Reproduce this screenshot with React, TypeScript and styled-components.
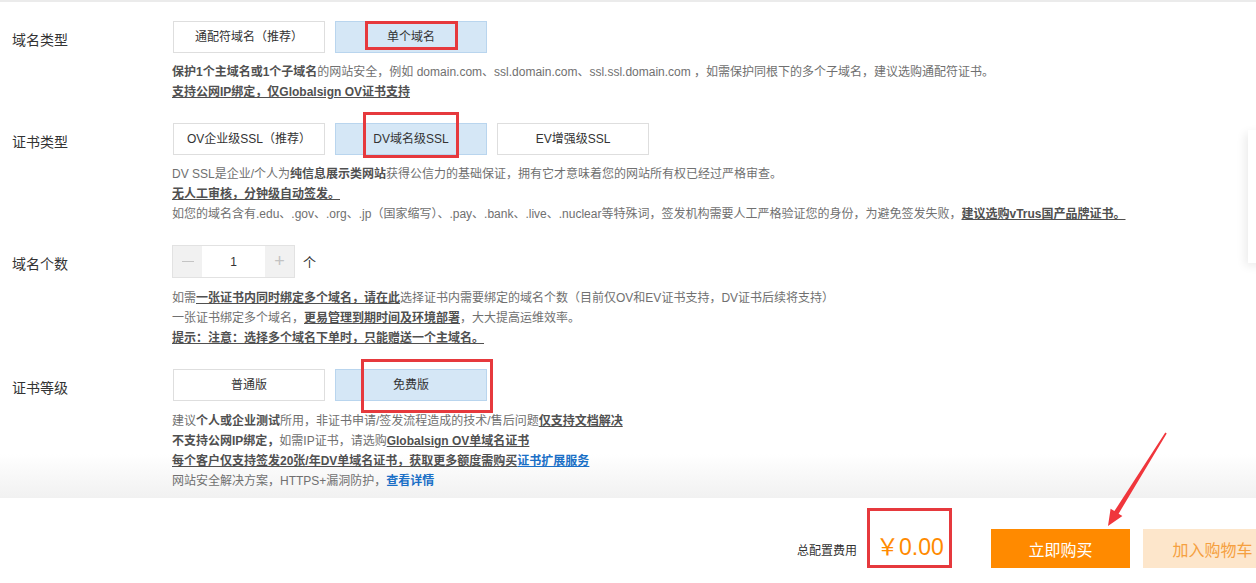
import React from "react";
import styled, { createGlobalStyle } from "styled-components";

const GlobalStyle = createGlobalStyle`
  html, body { margin: 0; padding: 0; background: #fff; }
  body {
    font-family: "Liberation Sans", Arial, "Noto Sans CJK SC", sans-serif;
    font-size: 12px;
    color: #333;
    overflow: hidden;
  }
  * { box-sizing: border-box; }
`;

const Page = styled.div`
  position: relative;
  width: 1256px;
  height: 583px;
  overflow: hidden;
  background: #fff;
`;

const Main = styled.div`
  height: 498px;
  border-top: 2px solid #ebebeb;
  padding: 19px 0 0 12px;
  display: flex;
  flex-direction: column;
  gap: 21px;
  background: linear-gradient(#fff 0, #fff 452px, #f1f1f1 496px);
`;

const Section = styled.section`
  display: grid;
  grid-template-columns: 160px 1fr;
`;

const Label = styled.div`
  font-size: 14px;
  color: #333;
  line-height: 32px;
  padding-top: 3px;
`;

const Body = styled.div`
  display: flex;
  flex-direction: column;
`;

const Options = styled.div`
  display: flex;
  gap: 10px;
  padding-left: 1px;
`;

const Option = styled.div<{ $active?: boolean }>`
  position: relative;
  width: 152px;
  height: 32px;
  line-height: 30px;
  text-align: center;
  font-size: 12px;
  color: #333;
  background: ${(p) => (p.$active ? "#d5e7f6" : "#fff")};
  border: 1px solid ${(p) => (p.$active ? "#b9d5ee" : "#dedede")};
`;

const Annot = styled.span<{ $l: number; $t: number; $w: number; $h: number }>`
  position: absolute;
  left: ${(p) => p.$l}px;
  top: ${(p) => p.$t}px;
  width: ${(p) => p.$w}px;
  height: ${(p) => p.$h}px;
  border: 3px solid #e6393d;
  pointer-events: none;
`;

const Desc = styled.div<{ $mt?: number }>`
  margin-top: ${(p) => p.$mt ?? 9}px;
  font-size: 12px;
  line-height: 20px;
  color: #707070;
  white-space: nowrap;
`;

const Line = styled.div``;

const B = styled.b`
  font-weight: bold;
  color: #505050;
`;

const BU = styled.b`
  font-weight: bold;
  color: #505050;
  text-decoration: underline;
`;

const BlueU = styled.b`
  font-weight: bold;
  color: #1a6fc6;
  text-decoration: underline;
`;

const Blue = styled.span`
  color: #1a6fc6;
  font-weight: bold;
`;

const StepRow = styled.div`
  display: flex;
  align-items: center;
  gap: 8px;
`;

const Stepper = styled.div`
  display: flex;
  height: 33px;
  border: 1px solid #e2e2e2;
`;

const StepBtn = styled.div`
  width: 29px;
  background: #f1f1f1;
  color: #c2c2c2;
  font-size: 18px;
  font-weight: 300;
  display: flex;
  align-items: center;
  justify-content: center;
`;

const MinusBar = styled.span`
  display: block;
  width: 12px;
  height: 1px;
  background: #c4c4c4;
`;

const StepInput = styled.div`
  width: 63px;
  background: #fff;
  color: #333;
  font-size: 12px;
  display: flex;
  align-items: center;
  justify-content: center;
`;

const Unit = styled.span`
  font-size: 13px;
  color: #333;
`;

const Footer = styled.footer`
  height: 85px;
  background: #fff;
  display: flex;
  justify-content: flex-end;
`;

const FooterRow = styled.div`
  display: flex;
  align-items: flex-end;
  margin-right: -26px;
  padding-bottom: 15px;
`;

const TotalLabel = styled.span`
  font-size: 12px;
  color: #333;
  line-height: 16px;
  margin-bottom: 9px;
`;

const Price = styled.div`
  position: relative;
  margin-left: 10px;
  width: 85px;
  height: 60px;
  padding: 19px 0 0 9px;
  line-height: 40px;
  font-size: 23px;
  color: #ff8a00;
  white-space: nowrap;
`;

const BuyButton = styled.button`
  margin-left: 39px;
  width: 139px;
  height: 39px;
  border: none;
  background: #ff8a00;
  color: #fff;
  font-size: 16px;
  font-family: inherit;
`;

const CartButton = styled.button`
  margin-left: 13px;
  width: 139px;
  height: 39px;
  border: none;
  background: #fde6cb;
  color: #f5a040;
  font-size: 16px;
  font-family: inherit;
`;

const SidePanel = styled.div`
  position: absolute;
  left: 1248px;
  top: 130px;
  width: 20px;
  height: 133px;
  background: #fff;
  box-shadow: -3px 3px 10px rgba(0, 0, 0, 0.08);
`;

const Arrow = styled.svg`
  position: absolute;
  left: 1096px;
  top: 426px;
  width: 80px;
  height: 106px;
  pointer-events: none;
`;

export default function App() {
  return (
    <Page>
      <GlobalStyle />
      <Main>
        <Section>
          <Label>域名类型</Label>
          <Body>
            <Options>
              <Option>通配符域名（推荐）</Option>
              <Option $active>
                单个域名
                <Annot $l={29} $t={-1} $w={93} $h={29} />
              </Option>
            </Options>
            <Desc>
              <Line>
                <B>保护1个主域名或1个子域名</B>的网站安全，例如 domain.com、ssl.domain.com、ssl.ssl.domain.com ，如需保护同根下的多个子域名，建议选购通配符证书。
              </Line>
              <Line>
                <BU>支持公网IP绑定，仅Globalsign OV证书支持</BU>
              </Line>
            </Desc>
          </Body>
        </Section>

        <Section>
          <Label>证书类型</Label>
          <Body>
            <Options>
              <Option>OV企业级SSL（推荐）</Option>
              <Option $active>
                DV域名级SSL
                <Annot $l={27} $t={-12} $w={96} $h={46} />
              </Option>
              <Option>EV增强级SSL</Option>
            </Options>
            <Desc>
              <Line>
                DV SSL是企业/个人为<B>纯信息展示类网站</B>获得公信力的基础保证，拥有它才意味着您的网站所有权已经过严格审查。
              </Line>
              <Line>
                <BU>无人工审核，分钟级自动签发。</BU>
              </Line>
              <Line>
                如您的域名含有.edu、.gov、.org、.jp（国家缩写）、.pay、.bank、.live、.nuclear等特殊词，签发机构需要人工严格验证您的身份，为避免签发失败，
                <BU>建议选购vTrus国产品牌证书。</BU>
              </Line>
            </Desc>
          </Body>
        </Section>

        <Section>
          <Label>域名个数</Label>
          <Body>
            <StepRow>
              <Stepper>
                <StepBtn>
                  <MinusBar />
                </StepBtn>
                <StepInput>1</StepInput>
                <StepBtn>+</StepBtn>
              </Stepper>
              <Unit>个</Unit>
            </StepRow>
            <Desc $mt={10}>
              <Line>
                如需<BU>一张证书内同时绑定多个域名，请在此</BU>选择证书内需要绑定的域名个数（目前仅OV和EV证书支持，DV证书后续将支持）
              </Line>
              <Line>
                一张证书绑定多个域名，<BU>更易管理到期时间及环境部署</BU>，大大提高运维效率。
              </Line>
              <Line>
                <BU>提示：注意：选择多个域名下单时，只能赠送一个主域名。</BU>
              </Line>
            </Desc>
          </Body>
        </Section>

        <Section>
          <Label>证书等级</Label>
          <Body>
            <Options>
              <Option>普通版</Option>
              <Option $active>
                免费版
                <Annot $l={25} $t={-11} $w={132} $h={54} />
              </Option>
            </Options>
            <Desc $mt={10}>
              <Line>
                建议<B>个人或企业测试</B>所用，非证书申请/签发流程造成的技术/售后问题<BU>仅支持文档解决</BU>
              </Line>
              <Line>
                <B>不支持公网IP绑定，</B>如需IP证书，请选购<BU>Globalsign OV单域名证书</BU>
              </Line>
              <Line>
                <BU>每个客户仅支持签发20张/年DV单域名证书，获取更多额度需购买</BU>
                <BlueU>证书扩展服务</BlueU>
              </Line>
              <Line>
                网站安全解决方案，HTTPS+漏洞防护，<Blue>查看详情</Blue>
              </Line>
            </Desc>
          </Body>
        </Section>
      </Main>

      <Footer>
        <FooterRow>
          <TotalLabel>总配置费用</TotalLabel>
          <Price>
            ￥0.00
            <Annot $l={0} $t={0} $w={85} $h={60} />
          </Price>
          <BuyButton>立即购买</BuyButton>
          <CartButton>加入购物车</CartButton>
        </FooterRow>
      </Footer>

      <SidePanel />

      <Arrow viewBox="0 0 80 106">
        <polygon
          points="69.3,6.6 70.7,7.4 22.6,87.7 26.4,90.1 12,100 14.6,82.7 18.4,85.1"
          fill="#f0363c"
        />
      </Arrow>
    </Page>
  );
}
